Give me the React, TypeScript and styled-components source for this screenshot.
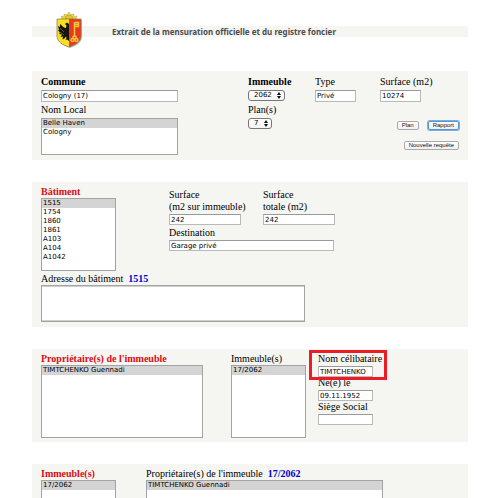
import React, { useId } from "react";
import styled, { createGlobalStyle } from "styled-components";

const sans = `"DejaVu Sans", Verdana, sans-serif`;
const serif = `"Liberation Serif", "Times New Roman", serif`;

const GlobalStyle = createGlobalStyle`
  *, *::before, *::after { box-sizing: border-box; }
  html { scrollbar-width: none; background: #fff; }
  body { margin: 0; color: #000; font: 10px/12px ${serif}; }
`;

const Page = styled.main`
  padding: 26px 32px;
`;

const Header = styled.header`
  display: flex;
  align-items: center;
  gap: 29px;
  height: 11px;
  padding-left: 23px;
  margin-bottom: 34px;
  background: #f5f5f1;
`;

const Logo = styled.svg`
  flex: none;
  width: 28px;
  height: 36px;
  margin-bottom: 4px;
`;

const Title = styled.h1`
  margin: 0;
  font: bold 8px/11px "Noto Sans", "Open Sans", sans-serif;
  color: #4c4c4c;
  white-space: nowrap;
`;

const Form = styled.form`
  display: flex;
  flex-direction: column;
  gap: 22px;
`;

const Panel = styled.section<{ $top?: number; $bottom?: number }>`
  padding: ${(p) => p.$top ?? 4}px 9px ${(p) => p.$bottom ?? 4}px;
  background: #f5f5f1;
`;

const Columns = styled.div<{ $columns: string; $gap?: number }>`
  display: grid;
  grid-template-columns: ${(p) => p.$columns};
  row-gap: ${(p) => p.$gap ?? 0}px;
  align-items: start;
`;

const FieldBox = styled.div<{ $gap: number }>`
  position: relative;
  display: flex;
  flex-direction: column;
  align-items: flex-start;
  gap: ${(p) => p.$gap}px;
`;

const Stack = styled.div<{ $top?: number; $gap?: number }>`
  display: flex;
  flex-direction: column;
  align-items: flex-start;
  gap: ${(p) => p.$gap ?? 0}px;
  padding-top: ${(p) => p.$top ?? 0}px;
`;

const Caption = styled.label<{ $tone?: "bold" | "red" }>`
  white-space: pre-line;
  font-weight: ${(p) => (p.$tone ? "bold" : "normal")};
  color: ${(p) => (p.$tone === "red" ? "#dc0a14" : "#000")};
`;

const Reference = styled.strong`
  margin-left: 5px;
  color: #0000cc;
`;

const TextBox = styled.input<{ $width: number; $height?: number }>`
  width: ${(p) => p.$width}px;
  height: ${(p) => p.$height ?? 11}px;
  padding: 0 1px;
  border: 1px solid #b9b9b9;
  border-top-color: #999;
  border-radius: 0;
  background: #fff;
  color: #000;
  font: 7px/9px ${sans};
`;

const TextArea = styled.textarea`
  display: block;
  width: 264px;
  height: 37px;
  padding: 1px;
  border: 1px solid #a3a3a3;
  box-shadow: inset 0 1px #d0d0d0, inset 0 -1px #d0d0d0;
  background: #fff;
  font: 7px/9px ${sans};
  resize: none;
`;

const ListBox = styled.select<{ $width: number; $height: number }>`
  width: ${(p) => p.$width}px;
  height: ${(p) => p.$height}px;
  padding: 0;
  border: 1px solid #a3a3a3;
  border-radius: 0;
  background: #fff;
  color: #000;
  font: 7px/9px ${sans};
  overflow: hidden;

  option {
    height: 9px;
    min-height: 9px;
    padding: 0 1px;
    color: #000;
  }
  option:checked {
    background: #d4d4d4 linear-gradient(#d4d4d4, #d4d4d4);
    color: #000;
  }
`;

const DropFrame = styled.span`
  position: relative;
  display: inline-flex;

  svg {
    position: absolute;
    right: 4px;
    top: 2px;
    width: 4px;
    height: 7px;
    pointer-events: none;
  }
`;

const DropDown = styled.select`
  appearance: none;
  height: 11px;
  padding: 0 12px 0 5px;
  border: 1px solid #777;
  border-radius: 3px;
  background: linear-gradient(#fff, #f4f4f4);
  color: #000;
  font: 7px/9px ${sans};
`;

const Actions = styled.div`
  grid-column: 3 / 5;
  display: flex;
  flex-direction: column;
  align-items: flex-end;
  gap: 11px;
  padding-top: 17px;
`;

const ButtonRow = styled.div`
  display: flex;
  gap: 9px;
`;

const Button = styled.button<{ $focused?: boolean }>`
  height: 9px;
  padding: 0 4px;
  border: 1px solid ${(p) => (p.$focused ? "#5a94d0" : "#aaa")};
  border-radius: 2px;
  background: linear-gradient(#fff, #f0f0f0);
  box-shadow: ${(p) => (p.$focused ? "0 0 0 1px #78aee4" : "none")};
  color: #111;
  font: 6px/7px "Liberation Sans", Arial, sans-serif;
`;

const Highlight = styled.span`
  position: absolute;
  z-index: 1;
  inset: -3px -5px -3px -9px;
  border: 3px solid #ed1c24;
  pointer-events: none;
`;

type Tone = "bold" | "red";

function TextField(props: {
  label: string;
  value: string;
  width: number;
  height?: number;
  gap?: number;
  tone?: Tone;
  highlighted?: boolean;
}) {
  const id = useId();
  return (
    <FieldBox $gap={props.gap ?? 1}>
      <Caption htmlFor={id} $tone={props.tone}>{props.label}</Caption>
      <TextBox id={id} defaultValue={props.value} $width={props.width} $height={props.height} />
      {props.highlighted && <Highlight />}
    </FieldBox>
  );
}

function ListField(props: {
  label: string;
  options: string[];
  width: number;
  height?: number;
  gap?: number;
  tone?: Tone;
  reference?: string;
}) {
  const id = useId();
  return (
    <FieldBox $gap={props.gap ?? 0}>
      <Caption htmlFor={id} $tone={props.tone}>
        {props.label}
        {props.reference && <Reference>{props.reference}</Reference>}
      </Caption>
      <ListBox id={id} size={4} defaultValue={props.options[0]} $width={props.width} $height={props.height ?? 73}>
        {props.options.map((o) => <option key={o}>{o}</option>)}
      </ListBox>
    </FieldBox>
  );
}

function DropField(props: { label: string; value: string; tone?: Tone }) {
  const id = useId();
  return (
    <FieldBox $gap={2}>
      <Caption htmlFor={id} $tone={props.tone}>{props.label}</Caption>
      <DropFrame>
        <DropDown id={id} defaultValue={props.value}>
          <option>{props.value}</option>
        </DropDown>
        <svg viewBox="0 0 4 7" aria-hidden="true">
          <path d="M2 0 4 3H0ZM0 4h4L2 7Z" fill="#111" />
        </svg>
      </DropFrame>
    </FieldBox>
  );
}

function GenevaArms() {
  const shield = "M2 7H26V24C26 30 20 33 14 35C8 33 2 30 2 24Z";
  return (
    <Logo viewBox="0 0 28 36" role="img" aria-label="Genève">
      <path d={shield} transform="translate(1 1)" fill="#999" opacity="0.6" />
      <path d="M7 7 6 4 9 5 9 2 12 3 14 0 16 3 19 2 19 5 22 4 21 7Z" fill="#f0dc50" stroke="#b09a30" strokeWidth="0.5" />
      <path d="M10 7a4 4 0 0 1 8 0Z" fill="#e4c62c" stroke="#a58a24" strokeWidth="0.5" />
      <path d="M2 7H14V35C8 33 2 30 2 24Z" fill="#f8e01c" />
      <path d="M14 7H26V24C26 30 20 33 14 35Z" fill="#e83a1e" />
      <path
        d="M14 12 12 10.500 10 12 11.500 13.500 11 16 9 15.500 5 12 5 15 3 14 4 18 3 18 5 21 4 22 7 22.500 5.500 25 8 24.500 7.500 27.500 9.500 26.500 11 24.500 11.500 26 10.500 28 12 27.500 14 29Z"
        fill="#181410"
      />
      <path d="M5 16 9 20M5 20 9 23" stroke="#a89a20" strokeWidth="0.5" />
      <g fill="none" stroke="#f4c638" strokeWidth="1.500">
        <path d="M19.500 10V25M20 10.500H23.500V14.500H20M20 12.500H23" />
        <circle cx="19.500" cy="25.500" r="1.600" />
        <circle cx="17.500" cy="28" r="1.500" />
        <circle cx="21.500" cy="28" r="1.500" />
      </g>
      <path d={shield} fill="none" stroke="#8a7350" strokeWidth="0.7" />
    </Logo>
  );
}

export default function App() {
  const addressId = useId();
  return (
    <>
      <GlobalStyle />
      <Page>
        <Header>
          <GenevaArms />
          <Title>Extrait de la mensuration officielle et du registre foncier</Title>
        </Header>
        <Form onSubmit={(e) => e.preventDefault()}>
          <Panel $top={5} $bottom={5}>
            <Columns $columns="207fr 67fr 65fr 79fr" $gap={2}>
              <TextField label="Commune" tone="bold" value="Cologny (17)" width={137} height={12} gap={2} />
              <DropField label="Immeuble" tone="bold" value="2062" />
              <TextField label="Type" value="Privé" width={41} height={12} gap={2} />
              <TextField label="Surface (m2)" value="10274" width={41} height={12} gap={2} />
              <ListField label="Nom Local" options={["Belle Haven", "Cologny"]} width={137} height={37} gap={2} />
              <DropField label="Plan(s)" value="7" />
              <Actions>
                <ButtonRow>
                  <Button type="button">Plan</Button>
                  <Button type="button" $focused>Rapport</Button>
                </ButtonRow>
                <Button type="button">Nouvelle requête</Button>
              </Actions>
            </Columns>
          </Panel>

          <Panel $bottom={5}>
            <Stack $gap={2}>
              <Columns $columns="128px auto">
                <ListField
                  label="Bâtiment"
                  tone="red"
                  options={["1515", "1754", "1860", "1861", "A103", "A104", "A1042"]}
                  width={75}
                />
                <Stack $top={3} $gap={2}>
                  <Columns $columns="94px auto">
                    <TextField label={"Surface\n(m2 sur immeuble)"} value="242" width={72} />
                    <TextField label={"Surface\ntotale (m2)"} value="242" width={72} />
                  </Columns>
                  <TextField label="Destination" value="Garage privé" width={165} />
                </Stack>
              </Columns>
              <FieldBox $gap={0}>
                <Caption htmlFor={addressId}>
                  Adresse du bâtiment<Reference>1515</Reference>
                </Caption>
                <TextArea id={addressId} />
              </FieldBox>
            </Stack>
          </Panel>

          <Panel>
            <Columns $columns="190px 87px auto">
              <ListField label="Propriétaire(s) de l'immeuble" tone="red" options={["TIMTCHENKO Guennadi"]} width={162} />
              <ListField label="Immeuble(s)" options={["17/2062"]} width={75} />
              <Stack>
                <TextField label="Nom célibataire" value="TIMTCHENKO" width={55} highlighted />
                <TextField label="Né(e) le" value="09.11.1952" width={55} />
                <TextField label="Siège Social" value="" width={55} />
              </Stack>
            </Columns>
          </Panel>

          <Panel>
            <Columns $columns="105px auto">
              <ListField label="Immeuble(s)" tone="red" options={["17/2062"]} width={75} />
              <ListField
                label="Propriétaire(s) de l'immeuble"
                reference="17/2062"
                options={["TIMTCHENKO Guennadi"]}
                width={237}
              />
            </Columns>
          </Panel>
        </Form>
      </Page>
    </>
  );
}
